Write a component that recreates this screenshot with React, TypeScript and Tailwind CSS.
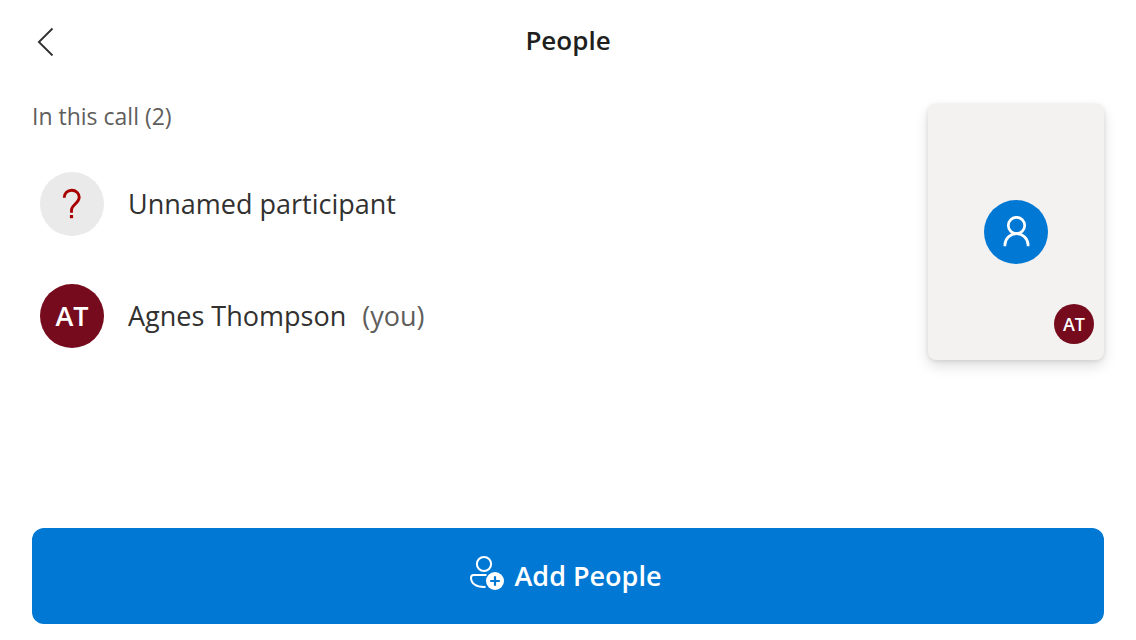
import React from "react";

type Participant = {
  id: string;
  name?: string;
  initials?: string;
  isYou?: boolean;
};

const participants: Participant[] = [
  { id: "unnamed" },
  { id: "agnes", name: "Agnes Thompson", initials: "AT", isYou: true },
];

function BackIcon() {
  return (
    <svg className="size-8" viewBox="0 0 32 32" fill="none" stroke="#323130" strokeWidth="1.9" aria-hidden="true">
      <path d="M20.5 4.5 6.9 18 20.5 31.500" />
    </svg>
  );
}

function QuestionIcon() {
  return (
    <svg className="size-8" viewBox="0 0 32 32" fill="none" aria-hidden="true">
      <path
        d="M8.2 9.800C8.200 5.300 11.500 2.200 15.700 2.200s7.500 3 7.500 7.100c0 5.900-7.700 7.500-7.700 13v2.500"
        stroke="#a80000"
        strokeWidth="2.9"
      />
      <path d="M13.900 27h3.200v3.200h-3.200z" fill="#a80000" />
    </svg>
  );
}

function PersonIcon() {
  return (
    <svg className="size-8" viewBox="0 0 32 32" fill="none" stroke="#fff" strokeWidth="2.7" aria-hidden="true">
      <circle cx="16.5" cy="9.5" r="8.2" />
      <path d="M4.900 30.200v-1a11.600 11.600 0 0 1 23.200 0v1" />
    </svg>
  );
}

function AddPersonIcon() {
  return (
    <svg className="h-11 w-9" viewBox="0 0 36 44" fill="none" aria-hidden="true">
      <g stroke="#fff" strokeWidth="2">
        <circle cx="16" cy="10" r="7.1" />
        <path d="M18.5 21H5.6A2.7 2.7 0 0 0 3 23.7c0 5.6 5 9.3 13 9.3h1.5" />
      </g>
      <circle cx="27" cy="27" r="9" fill="#fff" />
      <path d="M27 22.2v9.6M22.2 27h9.6" stroke="#0078d4" strokeWidth="2.2" />
    </svg>
  );
}

function ParticipantRow({ person }: { person: Participant }) {
  return (
    <li className="flex h-28 items-center gap-6 pl-2">
      {person.initials ? (
        <span className="flex size-16 shrink-0 items-center justify-center rounded-full bg-[#750b1c] text-[27px] font-semibold text-white">
          {person.initials}
        </span>
      ) : (
        <span className="flex size-16 shrink-0 items-center justify-center rounded-full bg-[#eaeaea]">
          <QuestionIcon />
        </span>
      )}
      <span className="flex gap-4 text-[27px] text-[#323130]">
        {person.name ?? "Unnamed participant"}
        {person.isYou && <span className="text-[#605e5c]">(you)</span>}
      </span>
    </li>
  );
}

export default function App() {
  return (
    <div className="flex min-h-screen flex-col bg-white px-8 pb-4 font-['Open_Sans','Noto_Sans',sans-serif]">
      <header className="grid h-20 grid-cols-[1fr_auto_1fr] items-center">
        <button type="button" aria-label="Back" className="w-8">
          <BackIcon />
        </button>
        <h1 className="text-[26px] font-semibold text-[#201f1e]">People</h1>
      </header>

      <main className="flex grow items-start justify-between pt-4">
        <section aria-labelledby="call-heading">
          <h2 id="call-heading" className="flex h-10 items-center text-[23px] text-[#605e5c]">
            In this call (2)
          </h2>
          <ul className="pt-3">
            {participants.map((person) => (
              <ParticipantRow key={person.id} person={person} />
            ))}
          </ul>
        </section>

        <aside
          aria-label="Call preview"
          className="relative mt-2 flex h-64 w-44 items-center justify-center rounded-lg bg-[#f3f2f1] shadow-[0_6px_14px_rgba(0,0,0,0.13),0_1px_4px_rgba(0,0,0,0.11)]"
        >
          <span className="flex size-16 items-center justify-center rounded-full bg-[#0078d4]">
            <PersonIcon />
          </span>
          <span className="absolute right-2.5 bottom-4 flex size-10 items-center justify-center rounded-full bg-[#750b1c] text-lg font-semibold text-white">
            AT
          </span>
        </aside>
      </main>

      <button
        type="button"
        className="flex h-24 w-full items-center justify-center gap-2.5 rounded-xl bg-[#0078d4] pr-1.5 text-[27px] font-semibold text-white"
      >
        <AddPersonIcon />
        Add People
      </button>
    </div>
  );
}
